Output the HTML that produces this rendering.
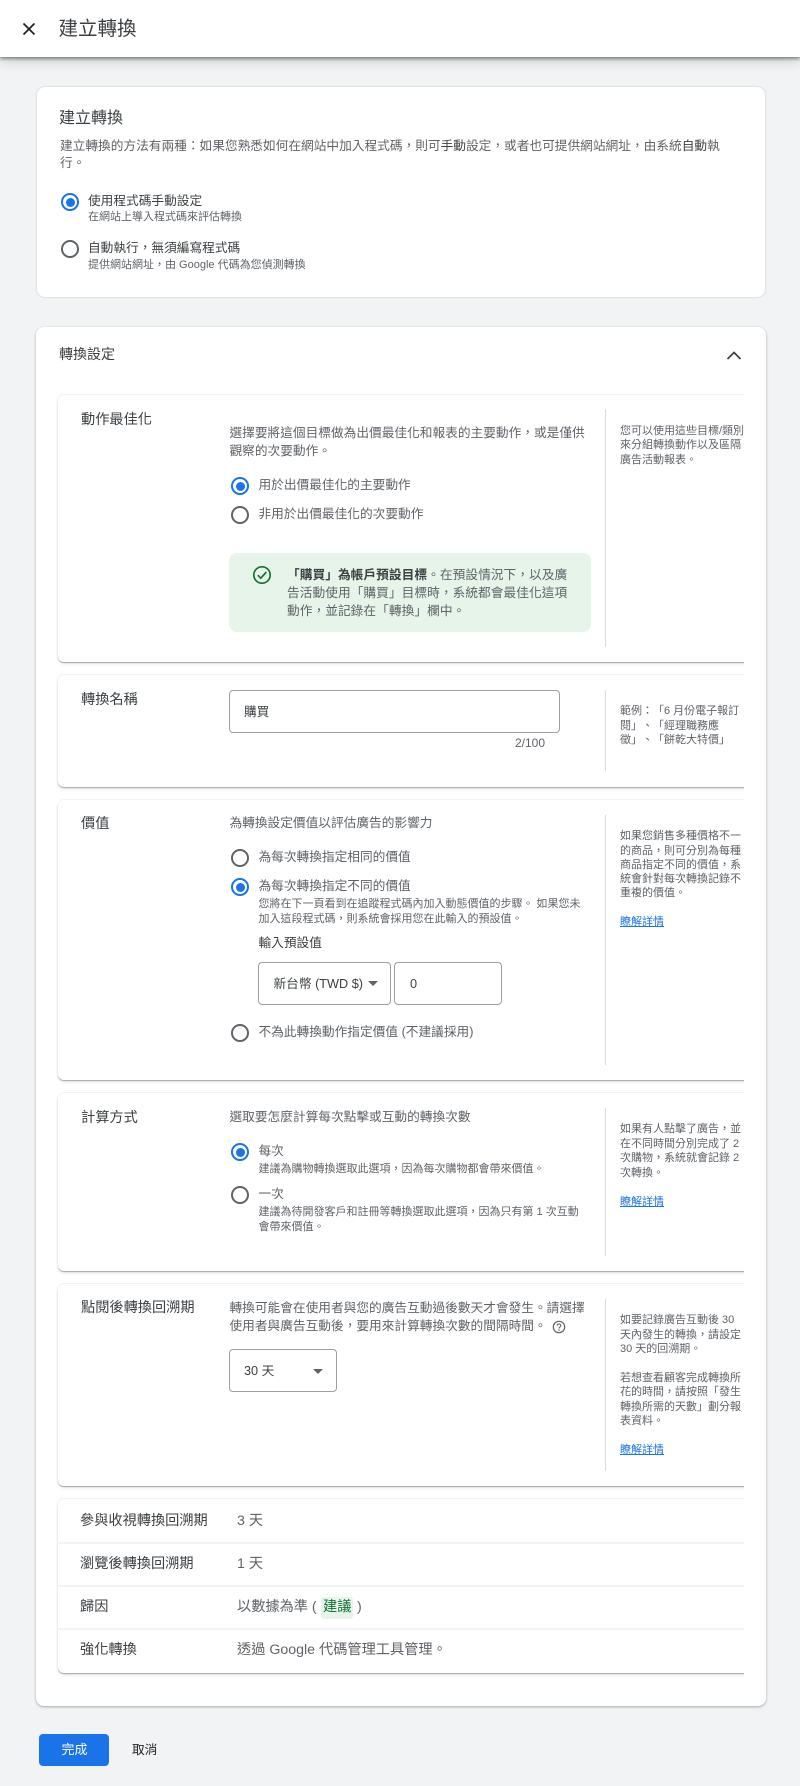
<!DOCTYPE html>
<html lang="zh-Hant"><head><meta charset="utf-8"><title>建立轉換</title>
<style>
html,body{margin:0;padding:0;background:#f1f3f4}
body{position:relative;width:800px;height:1786px;overflow:hidden;font-family:"Liberation Sans","Noto Sans CJK TC",sans-serif;color:#5f6368;text-spacing-trim:space-all;filter:blur(.3px)}
.t{position:absolute;white-space:nowrap;transform:translateY(-50%);font-size:12.7px;line-height:18px;color:#5f6368}
.l{font-size:14.2px;color:#3c4043;left:81px}
.d{left:229.5px}
.r{left:258.5px}
.s{font-size:11px;line-height:14px;color:#5f6368}
.u{font-size:11px;line-height:14px;color:#5f6368;left:620px}
.a{font-size:11px;line-height:14px;color:#1a73e8;left:620px;text-decoration:underline}
.n{font-size:14.2px;color:#5f6368}
.card{position:absolute;background:#fff;border-radius:8px}
.sec{position:absolute;left:58px;width:720px;background:#fff;border-radius:6px;box-shadow:0 1px 1px rgba(60,64,67,.4),0 -1px 0 rgba(60,64,67,.06),0 2px 3px rgba(60,64,67,.12)}
.v{position:absolute;left:605px;width:1px;background:#dadce0}
.radio{position:absolute;width:14px;height:14px;border:2px solid #5f6368;border-radius:50%;transform:translate(-50%,-50%);background:#fff}
.radio.on{border-color:#1a73e8}
.radio.on:after{content:"";position:absolute;left:2.5px;top:2.5px;width:9px;height:9px;background:#1a73e8;border-radius:50%}
.box{position:absolute;border:1px solid #9aa0a6;border-radius:4px;box-sizing:border-box;background:#fff}
.caret{position:absolute;width:0;height:0;border-left:5px solid transparent;border-right:5px solid transparent;border-top:5px solid #5f6368}
.sep{position:absolute;left:58px;width:720px;height:2px;background:#f1f3f4}
</style></head><body>

<div style="position:absolute;left:0;top:0;width:800px;height:57px;background:#fff;box-shadow:0 2px 3px rgba(60,64,67,.55),0 4px 12px rgba(60,64,67,.2);z-index:3">
<svg style="position:absolute;left:22px;top:22px" width="14" height="14" viewBox="0 0 14 14"><path d="M1.5 1.5L12.5 12.5M12.5 1.5L1.5 12.5" stroke="#202124" stroke-width="1.8" fill="none"/></svg>
<div class="t" style="left:58.5px;top:29px;font-size:19.5px;line-height:26px;color:#3c4043">建立轉換</div>
</div>

<div class="card" style="left:37px;top:87px;width:728px;height:210px;box-shadow:0 0 1px 1px rgba(60,64,67,.1)"></div>
<div class="t" style="left:59px;top:119px;font-size:16px;line-height:22px;color:#3c4043">建立轉換</div>
<div class="t" style="left:60px;top:146px">建立轉換的方法有兩種：如果您熟悉如何在網站中加入程式碼，則可<span style="color:#3c4043">手動</span>設定，或者也可提供網站網址，由系統<span style="color:#3c4043">自動</span>執</div>
<div class="t" style="left:60px;top:163px">行。</div>
<div class="radio on" style="left:70px;top:202px"></div>
<div class="t" style="left:88px;top:201px;color:#3c4043">使用程式碼手動設定</div>
<div class="t s" style="left:88px;top:217px;color:#5f6368">在網站上導入程式碼來評估轉換</div>
<div class="radio" style="left:70px;top:249px"></div>
<div class="t" style="left:88px;top:248px;color:#3c4043">自動執行，無須編寫程式碼</div>
<div class="t s" style="left:88px;top:265px;color:#5f6368">提供網站網址，由 Google 代碼為您偵測轉換</div>

<div class="card" style="left:36px;top:327px;width:730px;height:1379px;box-shadow:0 1px 2px rgba(60,64,67,.3),0 1px 3px rgba(60,64,67,.12)"></div>
<div class="t" style="left:59px;top:354px;font-size:14px;color:#3c4043">轉換設定</div>
<svg style="position:absolute;left:726px;top:350px" width="16" height="10" viewBox="0 0 16 10"><path d="M1.5 9L8 2.5L14.5 9" stroke="#3c4043" stroke-width="1.7" fill="none"/></svg>

<div style="position:absolute;left:0;top:0;width:800px;height:1786px;clip-path:inset(0 56px 0 0)">

<div class="sec" style="top:395px;height:267px"></div>
<div class="v" style="top:409px;height:238px"></div>
<div class="t l" style="top:420px">動作最佳化</div>
<div class="t d" style="top:433px">選擇要將這個目標做為出價最佳化和報表的主要動作，或是僅供</div>
<div class="t d" style="top:451px">觀察的次要動作。</div>
<div class="radio on" style="left:240px;top:486px"></div>
<div class="t r" style="top:485px">用於出價最佳化的主要動作</div>
<div class="radio" style="left:240px;top:515px"></div>
<div class="t r" style="top:514px">非用於出價最佳化的次要動作</div>
<div style="position:absolute;left:229px;top:553px;width:362px;height:79px;background:#e6f4ea;border-radius:8px"></div>
<svg style="position:absolute;left:252px;top:565px" width="20" height="20" viewBox="0 0 20 20"><circle cx="10" cy="10" r="8.2" fill="none" stroke="#137333" stroke-width="1.7"/><path d="M5.8 10.2L8.8 13.2L14.4 7" fill="none" stroke="#137333" stroke-width="1.7"/></svg>
<div class="t" style="left:287px;top:575px;letter-spacing:.05px"><b style="color:#3c4043">「購買」為帳戶預設目標</b>。在預設情況下，以及廣</div>
<div class="t" style="left:287px;top:593px;letter-spacing:.05px">告活動使用「購買」目標時，系統都會最佳化這項</div>
<div class="t" style="left:287px;top:611px;letter-spacing:.05px">動作，並記錄在「轉換」欄中。</div>
<div class="t u" style="top:431px">您可以使用這些目標/類別</div>
<div class="t u" style="top:445px">來分組轉換動作以及區隔</div>
<div class="t u" style="top:460px">廣告活動報表。</div>

<div class="sec" style="top:675px;height:112px"></div>
<div class="v" style="top:690px;height:81px"></div>
<div class="t l" style="top:700px">轉換名稱</div>
<div class="box" style="left:229px;top:690px;width:331px;height:43px"></div>
<div class="t" style="left:244px;top:712px;color:#3c4043">購買</div>
<div class="t" style="left:510px;top:743px;font-size:12px;width:35px;text-align:right">2/100</div>
<div class="t u" style="top:711px">範例：「6 月份電子報訂</div>
<div class="t u" style="top:726px">閱」、「經理職務應</div>
<div class="t u" style="top:740px">徵」、「餅乾大特價」</div>

<div class="sec" style="top:800px;height:280px"></div>
<div class="v" style="top:815px;height:250px"></div>
<div class="t l" style="top:824px">價值</div>
<div class="t d" style="top:823px">為轉換設定價值以評估廣告的影響力</div>
<div class="radio" style="left:240px;top:858px"></div>
<div class="t r" style="top:857px">為每次轉換指定相同的價值</div>
<div class="radio on" style="left:240px;top:887px"></div>
<div class="t r" style="top:886px">為每次轉換指定不同的價值</div>
<div class="t s r" style="top:904px">您將在下一頁看到在追蹤程式碼內加入動態價值的步驟。 如果您未</div>
<div class="t s r" style="top:919px">加入這段程式碼，則系統會採用您在此輸入的預設值。</div>
<div class="t r" style="top:943px;color:#3c4043">輸入預設值</div>
<div class="box" style="left:258px;top:962px;width:133px;height:43px"></div>
<div class="t" style="left:273.5px;top:984px;color:#3c4043">新台幣 (TWD $)</div>
<div class="caret" style="left:368px;top:981px"></div>
<div class="box" style="left:394px;top:962px;width:108px;height:43px"></div>
<div class="t" style="left:410px;top:984px;color:#3c4043">0</div>
<div class="radio" style="left:240px;top:1033px"></div>
<div class="t r" style="top:1032px">不為此轉換動作指定價值 (不建議採用)</div>
<div class="t u" style="top:836px">如果您銷售多種價格不一</div>
<div class="t u" style="top:851px">的商品，則可分別為每種</div>
<div class="t u" style="top:865px">商品指定不同的價值，系</div>
<div class="t u" style="top:879px">統會針對每次轉換記錄不</div>
<div class="t u" style="top:893px">重複的價值。</div>
<div class="t a" style="top:922px">瞭解詳情</div>

<div class="sec" style="top:1093px;height:178px"></div>
<div class="v" style="top:1108px;height:148px"></div>
<div class="t l" style="top:1118px">計算方式</div>
<div class="t d" style="top:1117px">選取要怎麼計算每次點擊或互動的轉換次數</div>
<div class="radio on" style="left:240px;top:1152px"></div>
<div class="t r" style="top:1151px">每次</div>
<div class="t s r" style="top:1169px">建議為購物轉換選取此選項，因為每次購物都會帶來價值。</div>
<div class="radio" style="left:240px;top:1195px"></div>
<div class="t r" style="top:1194px">一次</div>
<div class="t s r" style="top:1212px">建議為待開發客戶和註冊等轉換選取此選項，因為只有第 1 次互動</div>
<div class="t s r" style="top:1227px">會帶來價值。</div>
<div class="t u" style="top:1129px">如果有人點擊了廣告，並</div>
<div class="t u" style="top:1144px">在不同時間分別完成了 2</div>
<div class="t u" style="top:1158px">次購物，系統就會記錄 2</div>
<div class="t u" style="top:1173px">次轉換。</div>
<div class="t a" style="top:1202px">瞭解詳情</div>

<div class="sec" style="top:1284px;height:202px"></div>
<div class="v" style="top:1299px;height:172px"></div>
<div class="t l" style="top:1308px">點閱後轉換回溯期</div>
<div class="t d" style="top:1308px">轉換可能會在使用者與您的廣告互動過後數天才會發生。請選擇</div>
<div class="t d" style="top:1326px">使用者與廣告互動後，要用來計算轉換次數的間隔時間。</div>
<svg style="position:absolute;left:552px;top:1320px" width="14" height="14" viewBox="0 0 14 14"><circle cx="7" cy="7" r="5.7" fill="none" stroke="#5f6368" stroke-width="1.2"/><path d="M5.2 5.6C5.3 3.4 8.9 3.5 8.8 5.6C8.8 6.9 7 6.9 7 8.5" fill="none" stroke="#5f6368" stroke-width="1.1"/><circle cx="7" cy="10" r=".8" fill="#5f6368"/></svg>
<div class="box" style="left:229px;top:1349px;width:108px;height:43px"></div>
<div class="t" style="left:244px;top:1371px;color:#3c4043">30 天</div>
<div class="caret" style="left:313px;top:1369px"></div>
<div class="t u" style="top:1320px">如要記錄廣告互動後 30</div>
<div class="t u" style="top:1335px">天內發生的轉換，請設定</div>
<div class="t u" style="top:1349px">30 天的回溯期。</div>
<div class="t u" style="top:1378px">若想查看顧客完成轉換所</div>
<div class="t u" style="top:1392px">花的時間，請按照「發生</div>
<div class="t u" style="top:1407px">轉換所需的天數」劃分報</div>
<div class="t u" style="top:1421px">表資料。</div>
<div class="t a" style="top:1450px">瞭解詳情</div>

<div class="sec" style="top:1499px;height:174px"></div>
<div class="sep" style="top:1542px"></div>
<div class="sep" style="top:1585px"></div>
<div class="sep" style="top:1628px"></div>
<div class="t n" style="left:80px;top:1521px;color:#3c4043">參與收視轉換回溯期</div>
<div class="t n" style="left:237px;top:1521px">3 天</div>
<div class="t n" style="left:80px;top:1564px;color:#3c4043">瀏覽後轉換回溯期</div>
<div class="t n" style="left:237px;top:1564px">1 天</div>
<div class="t n" style="left:80px;top:1607px;color:#3c4043">歸因</div>
<div class="t n" style="left:237px;top:1607px">以數據為準 (</div>
<div style="position:absolute;left:321px;top:1597px;width:32px;height:22px;background:#e6f4ea;border-radius:3px"></div>
<div class="t n" style="left:323px;top:1607px;color:#137333">建議</div>
<div class="t n" style="left:357px;top:1607px">)</div>
<div class="t n" style="left:80px;top:1650px;color:#3c4043">強化轉換</div>
<div class="t n" style="left:237px;top:1650px">透過 Google 代碼管理工具管理。</div>
</div>

<div style="position:absolute;left:39px;top:1734px;width:70px;height:32px;background:#1a73e8;border-radius:4px;color:#fff;font-size:13px;line-height:32px;text-align:center;padding-left:1px;box-sizing:border-box">完成</div>
<div class="t" style="left:132px;top:1750px;color:#202124">取消</div>
</body></html>
